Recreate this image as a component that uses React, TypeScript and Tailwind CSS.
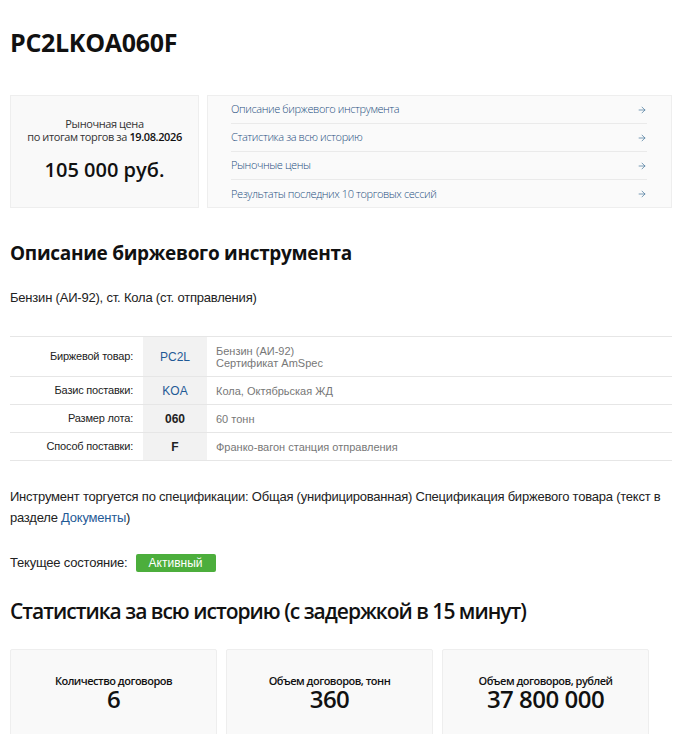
import { ArrowRight } from 'lucide-react';

const links = [
  'Описание биржевого инструмента',
  'Статистика за всю историю',
  'Рыночные цены',
  'Результаты последних 10 торговых сессий',
];

const specRows = [
  { label: 'Биржевой товар:', code: 'PC2L', link: true, desc: ['Бензин (АИ-92)', 'Сертификат AmSpec'] },
  { label: 'Базис поставки:', code: 'KOA', link: true, desc: ['Кола, Октябрьская ЖД'] },
  { label: 'Размер лота:', code: '060', link: false, desc: ['60 тонн'] },
  { label: 'Способ поставки:', code: 'F', link: false, desc: ['Франко-вагон станция отправления'] },
];

const stats = [
  { label: 'Количество договоров', value: '6' },
  { label: 'Объем договоров, тонн', value: '360' },
  { label: 'Объем договоров, рублей', value: '37 800 000' },
];

const fira = "font-['Open_Sans',sans-serif]";
const arial = "font-['Liberation_Sans',Arial,sans-serif]";

const App = () => {
  return (
    <div className={`w-[695px] h-[734px] overflow-hidden bg-white text-[#222] ${arial}`}>
      <div className="pl-[10px] pr-[23px]">
        <h1 className={`${fira} pt-[25px] text-[25px] font-bold leading-[34px] text-[#111] tracking-[-0.3px]`}>
          PC2LKOA060F
        </h1>

        {/* price + quick links */}
        <div className="mt-[36px] flex gap-[8px]">
          <div className="w-[189px] h-[113px] bg-[#f9f9f9] border border-[#eeeeee] flex flex-col items-center pt-[21px]">
            <div className={`${fira} text-[11px] leading-[13px] text-[#333] text-center tracking-[-0.4px]`}>
              <div>Рыночная цена</div>
              <div>
                по итогам торгов за <span className="font-semibold text-[#111]">19.08.2026</span>
              </div>
            </div>
            <div className={`${fira} mt-[14px] text-[20px] font-semibold text-[#111] leading-[26px]`}>
              105 000 руб.
            </div>
          </div>

          <div className="flex-1 h-[113px] bg-[#fafafa] border border-[#eeeeee] pl-[23px] pr-[24px] pt-0">
            {links.map((l, i) => (
              <div
                key={l}
                className={`flex items-center justify-between h-[28px] ${i < links.length - 1 ? 'border-b border-[#eaeaea]' : ''}`}
              >
                <span className={`${fira} text-[11px] font-light text-[#1e4f7f] tracking-[-0.4px]`}>{l}</span>
                <ArrowRight size={10} strokeWidth={1.6} className="text-[#3a6d94]" />
              </div>
            ))}
          </div>
        </div>

        <h2 className={`${fira} mt-[31px] text-[19px] font-bold leading-[28px] text-[#111] tracking-[-0.3px]`}>
          Описание биржевого инструмента
        </h2>

        <p className="mt-[23px] text-[13px] leading-[16px] text-[#222] tracking-[-0.2px]">
          Бензин (АИ-92), ст. Кола (ст. отправления)
        </p>

        {/* spec table */}
        <div className="mt-[30px] border-t border-[#e6e6e6] text-[11px]">
          {specRows.map((r, i) => (
            <div
              key={r.label}
              className={`flex border-b border-[#e6e6e6] ${i === 0 ? 'h-[40px]' : 'h-[28px]'}`}
            >
              <div className="w-[123px] flex items-center justify-end text-[#222] tracking-[-0.2px]">
                {r.label}
              </div>
              <div className="ml-[10px] w-[64px] bg-[#f2f2f2] flex items-center justify-center">
                <span
                  className={
                    r.link ? 'text-[#1f5a96] text-[12px]' : 'text-[#222] text-[12px] font-bold'
                  }
                >
                  {r.code}
                </span>
              </div>
              <div className="pl-[9px] flex flex-col justify-center text-[#777] leading-[12px]">
                {r.desc.map((d) => (
                  <div key={d}>{d}</div>
                ))}
              </div>
            </div>
          ))}
        </div>

        <p className="mt-[25px] text-[13px] leading-[21px] text-[#222] tracking-[-0.22px]">
          Инструмент торгуется по спецификации: Общая (унифицированная) Спецификация биржевого товара (текст в
          разделе <a className="text-[#1f5a96]">Документы</a>)
        </p>

        <div className="mt-[26px] flex items-center gap-[8px] text-[13px] h-[18px] tracking-[-0.2px]">
          <span>Текущее состояние:</span>
          <span className="inline-flex items-center justify-center w-[80px] h-[18px] bg-[#4cae3c] text-white text-[12px] rounded-[2px] tracking-normal">
            Активный
          </span>
        </div>

        <h2 className={`${fira} mt-[25px] text-[21px] font-semibold leading-[28px] text-[#111] tracking-[-1px]`}>
          Статистика за всю историю (с задержкой в 15 минут)
        </h2>

        <div className="mt-[24px] flex gap-[9px]">
          {stats.map((s) => (
            <div
              key={s.label}
              className="w-[207px] h-[100px] bg-[#f9f9f9] border border-[#eeeeee] rounded-[2px] flex flex-col items-center pt-[24px]"
            >
              <div className={`${fira} text-[11px] font-semibold leading-[14px] text-[#111] tracking-[-0.5px]`}>
                {s.label}
              </div>
              <div className={`${fira} text-[24px] font-semibold leading-[22px] text-[#111] tracking-[-0.5px]`}>
                {s.value}
              </div>
            </div>
          ))}
        </div>
      </div>
    </div>
  );
};

export default App;
